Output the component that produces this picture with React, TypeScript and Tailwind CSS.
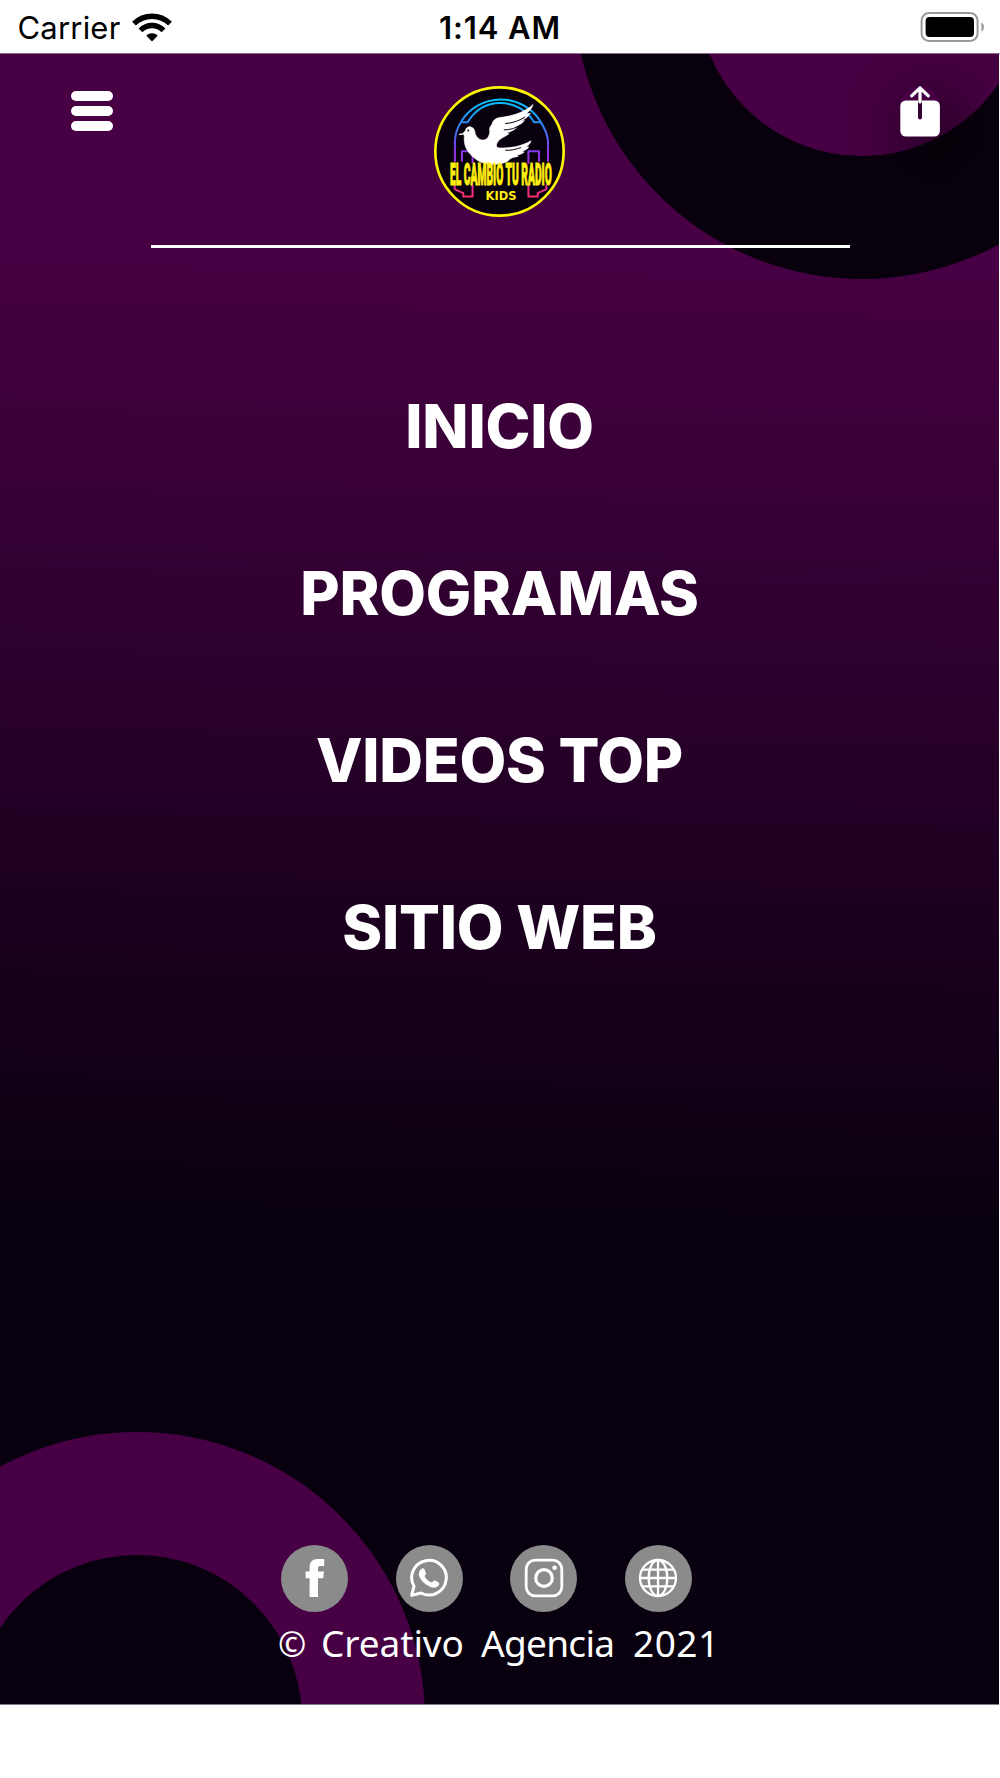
const MENU_ITEMS = ['INICIO', 'PROGRAMAS', 'VIDEOS TOP', 'SITIO WEB'];

function StatusBar() {
  return (
    <div className="h-[54px] bg-white border-b border-[#8d6b8c] grid grid-cols-3 items-center text-black">
      <div className="flex items-center pl-[17.5px]">
        <span className="pt-[2px] text-[31px] leading-none tracking-[0.2px]">Carrier</span>
        <svg className="ml-[11px] w-10 h-[30px]" viewBox="0 0 40 30">
          <path d="M20 29.5 14.2 23.6a8.2 8.2 0 0 1 11.6 0z" fill="#000" />
          <path d="M8.5 18.3a16.2 16.2 0 0 1 23 0" fill="none" stroke="#000" strokeWidth="5.4" />
          <path d="M2 11.7a25.5 25.5 0 0 1 36 0" fill="none" stroke="#000" strokeWidth="5.4" />
        </svg>
      </div>
      <span className="pt-[2px] text-center text-[31px] leading-none font-semibold tracking-[0.9px]">1:14 AM</span>
      <div className="flex justify-end pr-4">
        <svg className="w-[64px] h-[30px]" viewBox="0 0 64 30">
          <rect x="1.6" y="1" width="56" height="28" rx="7.5" fill="none" stroke="#999" strokeWidth="2" />
          <rect x="5.6" y="5" width="48.4" height="20" rx="4" fill="#000" />
          <path d="M61.4 10.6c3.4 1.6 3.4 7.4 0 9z" fill="#999" />
        </svg>
      </div>
    </div>
  );
}

function Logo() {
  return (
    <svg className="w-[131px] h-[131px]" viewBox="42 34 394 394">
      <defs>
        <linearGradient id="neon" x1="0" y1="70" x2="0" y2="370" gradientUnits="userSpaceOnUse">
          <stop offset="0" stopColor="#00c8ff" />
          <stop offset="0.25" stopColor="#2a8cf5" />
          <stop offset="0.5" stopColor="#7a3cf0" />
          <stop offset="0.75" stopColor="#c32bc8" />
          <stop offset="1" stopColor="#ff2e6a" />
        </linearGradient>
      </defs>
      <circle cx="239" cy="231" r="193" fill="#08000d" stroke="#fdf500" strokeWidth="8" />
      <g fill="none" stroke="url(#neon)" strokeWidth="6" strokeLinejoin="round">
        <path d="M105 262V200c0-20 8-42 20-61a140 140 0 0 1 236 0c13 20 24 42 24 66v57" />
        <path d="M125 143h18c22-36 56-58 98-58s82 22 102 58h18" />
        <path d="M126 262v-32h32v38M158 332v34h-28v-10l-26-12v-14" />
        <path d="M358 262v-32h-32v38M326 332v34h28v-10l26-12v-14" />
      </g>
      <path
        d="M127 180c3-6 6-9 9-10 1-10 9-15 17-13 10 3 12 12 13 21 6 12 15 21 29 18 9-3 13-12 15-24-2-9 0-16 6-22 3-12 10-19 24-21 33-4 69-12 100-39-5 14-13 22-22 29l14-3c-8 12-17 18-29 23l11-1c-9 11-20 17-32 20l9 1c-9 9-20 13-32 16l9 2c-10 9-24 12-32 22-7 9-8 16-2 21 17 2 35 0 51-3 19-4 33-9 49-18-3 9-8 14-15 18l8 1c-6 7-13 10-20 12l6 3c-8 6-14 7-21 8l3 5c-16 2-24 5-32 15-26 12-66 12-88-2-21-14-39-33-41-54-3-13 2-22-4-26-5-2-11-1-13 1z"
        fill="#fff"
        stroke="#fff"
        strokeWidth="2"
      />
      <circle cx="145" cy="168" r="3" fill="#08000d" />
      <path
        d="M256 147c24-2 44-9 60-20M252 166c20 0 34-5 50-14M249 212c20 3 40-1 60-10M256 227c15 2 34-3 48-8"
        fill="none"
        stroke="#08000d"
        strokeWidth="3"
      />
      <text
        transform="translate(90 331) scale(1 3.2)"
        fontSize="30"
        fontWeight="900"
        fontFamily="Roboto, sans-serif"
        fill="#ffee10"
        stroke="#ffee10"
        strokeWidth="1"
        textLength="306"
        lengthAdjust="spacingAndGlyphs"
      >
        EL CAMBIO TU RADIO
      </text>
      <text
        x="197"
        y="378"
        fontSize="35"
        fontWeight="700"
        fontFamily="'DejaVu Sans', sans-serif"
        fill="#ffee10"
        textLength="93"
        lengthAdjust="spacingAndGlyphs"
      >
        KIDS
      </text>
    </svg>
  );
}

function ShareIcon() {
  return (
    <svg className="w-10 h-[51px]" viewBox="0 0 40 51">
      <rect x="0.3" y="14.5" width="39.6" height="36" rx="5.5" fill="#fff" />
      <path d="M20 16v15.5" stroke="#350033" strokeWidth="4" strokeLinecap="round" />
      <path d="M20 16V2M11.7 9.8 20 1.8l8.3 8" fill="none" stroke="#fff" strokeWidth="3.2" strokeLinecap="round" strokeLinejoin="round" />
    </svg>
  );
}

function Header() {
  return (
    <header className="flex flex-col items-center pt-8">
      <div className="w-full grid grid-cols-[1fr_131px_1fr] items-start pl-[71px] pr-[59px]">
        <button className="mt-[5px] w-[42px] flex flex-col gap-[5px]" aria-label="Menú">
          <span className="h-[10px] w-full rounded-full bg-white" />
          <span className="h-[10px] w-full rounded-full bg-white" />
          <span className="h-[10px] w-full rounded-full bg-white" />
        </button>
        <div className="-ml-[6px]">
          <Logo />
        </div>
        <button
          className="justify-self-end rounded-full shadow-[14px_20px_50px_18px_rgba(0,0,0,0.4)]"
          aria-label="Compartir"
        >
          <ShareIcon />
        </button>
      </div>
      <div className="mt-7 ml-[2px] h-[3px] w-[699px] bg-white" />
    </header>
  );
}

function SocialLinks() {
  const circle = 'w-[67px] h-[67px] rounded-full bg-[#8b8b8b] flex items-center justify-center';
  return (
    <div className="flex gap-[47.6px]">
      <a href="#" className={circle} aria-label="Facebook">
        <svg className="w-10 h-10" viewBox="0 0 40 40">
          <path d="M14.6 39V20.2H10.6v-6.6h4V9.5C14.6 4 17.4 1 22.8 1h6.4v7h-4c-1.7 0-2.2.8-2.2 2.3v3.3h6l-.8 6.6H23V39z" fill="#fff" />
        </svg>
      </a>
      <a href="#" className={circle} aria-label="WhatsApp">
        <svg className="w-10 h-10" viewBox="0 0 40 40" fill="none">
          <path d="M2.6 37.4 5 28.3A17.3 17.3 0 1 1 12 35z" stroke="#fff" strokeWidth="3" strokeLinejoin="round" />
          <path
            d="M12.4 10.8c1-.8 2.4-.8 3 .5l1.5 3.5c.4 1-.1 1.8-1.4 3.1 1.5 3.2 4 5.4 7.4 6.6 1.6-1.8 2.2-2.4 3.2-1.9l3.6 1.9c1.2.7.6 2.6-.5 3.6-2.4 2.1-5.4 1.8-8.6.3-4.8-2.1-8-5.2-10.1-9.5-1.4-3-.7-6.2 1.9-8.1z"
            fill="#fff"
          />
        </svg>
      </a>
      <a href="#" className={circle} aria-label="Instagram">
        <svg className="w-10 h-10" viewBox="0 0 40 40" fill="none" stroke="#fff">
          <rect x="2.2" y="2.2" width="35.6" height="35.6" rx="9" strokeWidth="2.8" />
          <circle cx="20" cy="20" r="8.3" strokeWidth="3.2" />
          <circle cx="30.6" cy="9.8" r="2.3" fill="#fff" stroke="none" />
        </svg>
      </a>
      <a href="#" className={circle} aria-label="Sitio web">
        <svg className="w-10 h-10" viewBox="0 0 40 40" fill="none" stroke="#fff" strokeWidth="2.3">
          <circle cx="20" cy="20" r="18" />
          <ellipse cx="20" cy="20" rx="9.3" ry="18" />
          <path d="M20 2v36M2 20h36M4.5 11.7h31M4.5 28.3h31" />
        </svg>
      </a>
    </div>
  );
}

export default function App() {
  return (
    <div className="min-h-screen w-[1000px] bg-white font-['Inter',sans-serif]">
      <StatusBar />
      <div className="relative isolate overflow-hidden w-[999px] h-[1651px] flex flex-col border-b border-[#857588] bg-[linear-gradient(181deg,#460043_13%,#08000e_71%)] text-white">
        {/* Background rings */}
        <div className="absolute -z-10 left-[574px] top-[-351px] w-[576px] h-[576px] rounded-full border-[123px] border-[#09000d] bg-[#460043]" />
        <div className="absolute -z-10 left-[-151px] top-[1378px] w-[576px] h-[576px] rounded-full border-[123px] border-[#460043] bg-[#08000e]" />

        <Header />

        <nav className="mt-[95px] flex flex-col items-center">
          {MENU_ITEMS.map((label) => (
            <a
              key={label}
              href="#"
              className="h-[167px] flex items-center text-[60.5px] leading-none font-extrabold tracking-[-0.25px] whitespace-nowrap"
            >
              {label}
            </a>
          ))}
        </nav>

        <footer className="mt-auto pb-[36.5px] pl-[281px]">
          <SocialLinks />
          <p className="mt-[7px] ml-[-3px] flex items-baseline leading-[47px] text-[37px] whitespace-nowrap font-['Noto_Sans',sans-serif]">
            <span className="w-[43px] text-[34px]">©</span>
            <span className="w-[160px] tracking-[-0.1px]">Creativo</span>
            <span className="w-[152px] tracking-[-0.7px]">Agencia</span>
            <span className="tracking-[0.5px]">2021</span>
          </p>
        </footer>
      </div>
    </div>
  );
}
